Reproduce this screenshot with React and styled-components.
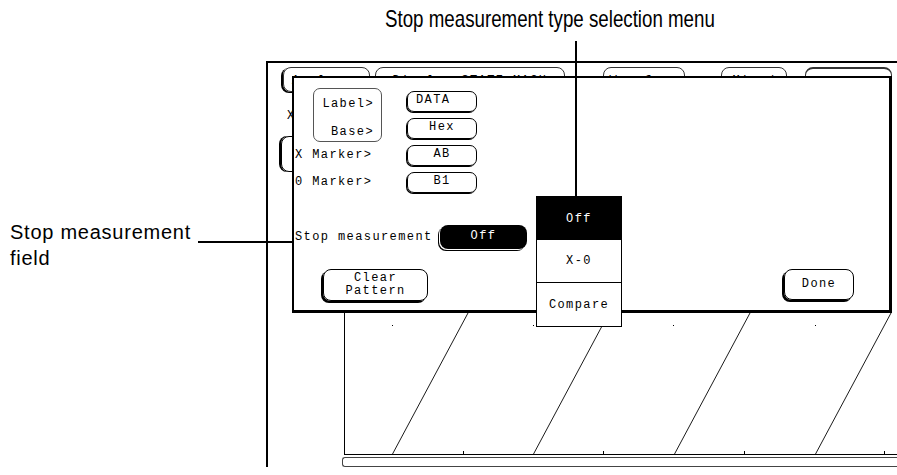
import React from 'react';
import styled, { createGlobalStyle } from 'styled-components';

const GlobalStyle = createGlobalStyle`
  html, body {
    margin: 0;
    padding: 0;
    background: #fff;
  }
  body {
    width: 897px;
    height: 475px;
    overflow: hidden;
  }
`;

const screenFont = `"Liberation Mono", "DejaVu Sans Mono", monospace`;
const captionFont = `"Liberation Sans", Arial, sans-serif`;

const Figure = styled.div`
  position: relative;
  width: 897px;
  height: 475px;
  background: #fff;
  color: #000;
  display: flex;
  flex-direction: column;
`;

const Header = styled.header`
  height: 61px;
  flex: none;
  display: flex;
  justify-content: flex-start;
  padding-left: 385px;
  box-sizing: border-box;
`;

const Title = styled.div`
  margin-top: 7px;
  font-family: ${captionFont};
  font-size: 24px;
  line-height: 24px;
  white-space: nowrap;
  transform: scaleX(0.78);
  transform-origin: left top;
`;

const Body = styled.div`
  display: flex;
  height: 406px;
`;

const Callout = styled.div`
  width: 266px;
  flex: none;
  padding: 158px 0 0 10px;
  box-sizing: border-box;
  font-family: ${captionFont};
  font-size: 20px;
  line-height: 26px;
  letter-spacing: 0.75px;
`;

const Screen = styled.section`
  flex: 1;
  border-top: 2px solid #000;
  border-left: 2px solid #000;
  display: flex;
  flex-direction: column;
  font-family: ${screenFont};
  font-size: 12px;
  letter-spacing: 1.4px;
`;

const TabRow = styled.div`
  height: 29px;
  flex: none;
  display: flex;
  align-items: flex-start;
  padding: 4px 0 0 15px;
  box-sizing: border-box;
`;

const Tab = styled.div`
  width: ${p => p.$w}px;
  margin-left: ${p => p.$gap || 0}px;
  height: 25px;
  box-sizing: border-box;
  border: 1px solid #333;
  border-top-width: ${p => (p.$active ? 2 : 1)}px;
  border-radius: 8px;
  box-shadow: ${p => (p.$shadow ? '-2px 1px 0 #000' : 'none')};
  text-align: center;
  padding-top: 7px;
  line-height: 12px;
  white-space: nowrap;
  overflow: hidden;
`;

const SideArea = styled.div`
  height: 221px;
  flex: none;
  padding: 17px 0 0 13px;
  box-sizing: border-box;
`;

const SideLetter = styled.div`
  margin-left: 6px;
  line-height: 14px;
`;

const SideButton = styled.div`
  margin-top: 13px;
  width: 60px;
  height: 36px;
  box-sizing: border-box;
  border: 1px solid #000;
  border-radius: 8px;
  box-shadow: -2px 0 0 #000;
`;

const Plot = styled.svg`
  display: block;
  flex: none;
  margin-left: 76px;
`;

const BottomBar = styled.div`
  margin: 2px 0 0 74px;
  height: 9px;
  border: 1px solid #444;
  border-right: none;
  border-radius: 3px 0 0 3px;
`;

const Dialog = styled.div`
  position: absolute;
  left: 292px;
  top: 76px;
  width: 600px;
  height: 237px;
  box-sizing: border-box;
  background: #fff;
  border: 2px solid #000;
  border-right-width: 3px;
  border-bottom-width: 3px;
  padding: 10px 0 0 1px;
  font-family: ${screenFont};
  font-size: 12px;
  letter-spacing: 1.4px;
  display: flex;
  flex-direction: column;
`;

const TopSection = styled.div`
  height: 137px;
  display: flex;
`;

const LeftCol = styled.div`
  width: 112px;
  display: flex;
  flex-direction: column;
`;

const GroupBox = styled.div`
  margin-left: 18px;
  width: 69px;
  height: 54px;
  box-sizing: border-box;
  border: 1px solid #555;
  border-radius: 7px;
  padding: 1px 7px 0 0;
  display: flex;
  flex-direction: column;
  align-items: flex-end;
`;

const GroupLine = styled.div`
  line-height: 28px;
  height: 28px;
`;

const MarkerLabel = styled.div`
  height: 27px;
  line-height: 27px;
  white-space: nowrap;
  &:first-of-type {
    margin-top: 3px;
  }
`;

const RightCol = styled.div`
  padding-top: 3px;
  display: flex;
  flex-direction: column;
  gap: 6px;
`;

const ValueButton = styled.div`
  width: 70px;
  height: 21px;
  box-sizing: border-box;
  border: 1px solid #000;
  border-radius: 7px;
  box-shadow: -1px 1px 0 #000;
  line-height: 17px;
  text-align: ${p => (p.$left ? 'left' : 'center')};
  padding-left: ${p => (p.$left ? 8 : 0)}px;
`;

const StopRow = styled.div`
  height: 24px;
  display: flex;
  align-items: center;
`;

const StopLabel = styled.div`
  width: 145px;
  white-space: nowrap;
`;

const OffButton = styled.div`
  width: 87px;
  height: 24px;
  background: #000;
  color: #fff;
  border-radius: 8px;
  text-align: center;
  line-height: 22px;
  box-shadow: -1px 1px 0 0 #fff, -2px 2px 0 0 #000;
`;

const BottomRow = styled.div`
  margin-top: 20px;
  display: flex;
  justify-content: space-between;
  align-items: flex-start;
  padding: 0 35px 0 28px;
`;

const PushButton = styled.div`
  width: ${p => p.$w}px;
  height: ${p => p.$h}px;
  box-sizing: border-box;
  border: 1px solid #000;
  border-radius: 8px;
  box-shadow: -2px 2px 0 #000;
  display: flex;
  flex-direction: column;
  align-items: center;
  justify-content: center;
  line-height: 13px;
  text-align: center;
`;

const Menu = styled.div`
  position: absolute;
  left: 536px;
  top: 196px;
  width: 86px;
  height: 131px;
  box-sizing: border-box;
  border: 1px solid #000;
  background: #fff;
  display: flex;
  flex-direction: column;
  font-family: ${screenFont};
  font-size: 12px;
  letter-spacing: 1.4px;
`;

const MenuItem = styled.div`
  height: ${p => p.$h}px;
  flex: ${p => (p.$h ? 'none' : 1)};
  display: flex;
  align-items: center;
  justify-content: center;
  background: ${p => (p.$selected ? '#000' : '#fff')};
  color: ${p => (p.$selected ? '#fff' : '#000')};
  border-bottom: ${p => (p.$divider ? '1px solid #000' : 'none')};
`;

const Leader = styled.div`
  position: absolute;
  background: #000;
  left: ${p => p.$x}px;
  top: ${p => p.$y}px;
  width: ${p => p.$w}px;
  height: ${p => p.$h}px;
`;

const diagonals = [48, 189, 330, 471];
const dots = [48, 189, 329, 471];
const ticks = [119, 259, 400, 540];

const Waveforms = () => (
  <Plot width="553" height="142" viewBox="0 0 553 142">
    <line x1="0.5" y1="0" x2="0.5" y2="142" stroke="#000" strokeWidth="1" />
    <line x1="0" y1="141.5" x2="553" y2="141.5" stroke="#000" strokeWidth="1" />
    {diagonals.map(x => (
      <line key={x} x1={x} y1="142" x2={x + 76} y2="0" stroke="#000" strokeWidth="0.9" />
    ))}
    {dots.map(x => (
      <rect key={x} x={x} y="12" width="1" height="1" fill="#000" />
    ))}
    {ticks.map(x => (
      <rect key={x} x={x} y="138" width="1" height="3" fill="#000" />
    ))}
  </Plot>
);

export default function App() {
  return (
    <>
      <GlobalStyle />
      <Figure>
        <Header>
          <Title>Stop measurement type selection menu</Title>
        </Header>
        <Body>
          <Callout>
            Stop measurement
            <br />
            field
          </Callout>
          <Screen>
            <TabRow>
              <Tab $w={87} $shadow>Analyzer</Tab>
              <Tab $w={190} $gap={5}>Display   STATE MACH</Tab>
              <Tab $w={82} $gap={38}>Waveform</Tab>
              <Tab $w={66} $gap={36}>Mixed</Tab>
              <Tab $w={87} $gap={18} $active>Run</Tab>
            </TabRow>
            <SideArea>
              <SideLetter>X</SideLetter>
              <SideButton />
            </SideArea>
            <Waveforms />
            <BottomBar />
          </Screen>
        </Body>

        <Dialog>
          <TopSection>
            <LeftCol>
              <GroupBox>
                <GroupLine>Label&gt;</GroupLine>
                <GroupLine>Base&gt;</GroupLine>
              </GroupBox>
              <MarkerLabel>X Marker&gt;</MarkerLabel>
              <MarkerLabel>0 Marker&gt;</MarkerLabel>
            </LeftCol>
            <RightCol>
              <ValueButton $left>DATA</ValueButton>
              <ValueButton>Hex</ValueButton>
              <ValueButton>AB</ValueButton>
              <ValueButton>B1</ValueButton>
            </RightCol>
          </TopSection>
          <StopRow>
            <StopLabel>Stop measurement</StopLabel>
            <OffButton>Off</OffButton>
          </StopRow>
          <BottomRow>
            <PushButton $w={105} $h={32}>
              <span>Clear</span>
              <span>Pattern</span>
            </PushButton>
            <PushButton $w={70} $h={31}>Done</PushButton>
          </BottomRow>
        </Dialog>

        <Menu>
          <MenuItem $h={43} $selected>Off</MenuItem>
          <MenuItem $h={42} $divider>X-0</MenuItem>
          <MenuItem>Compare</MenuItem>
        </Menu>

        <Leader $x={575} $y={41} $w={2} $h={155} />
        <Leader $x={198} $y={241} $w={94} $h={2} />
      </Figure>
    </>
  );
}
